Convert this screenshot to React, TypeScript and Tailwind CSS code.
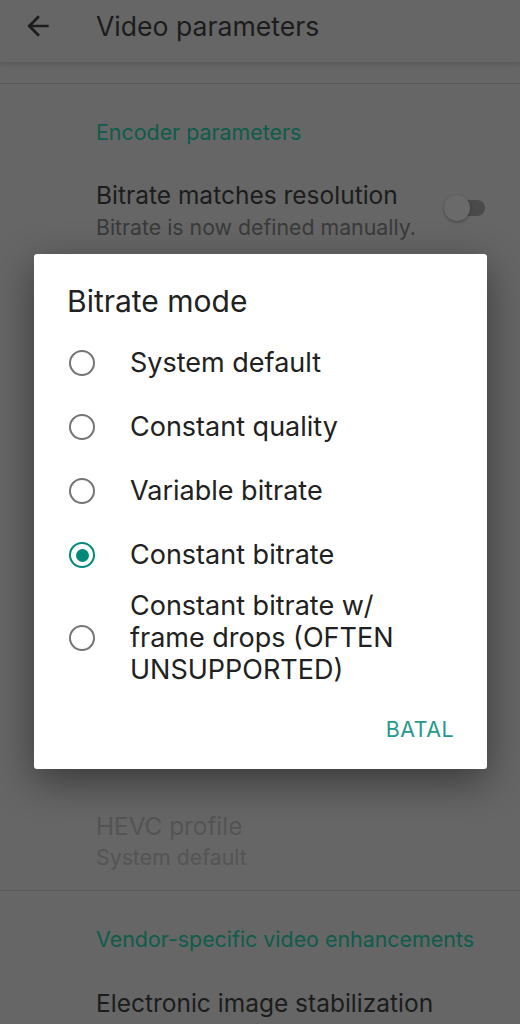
import React from 'react'

const font = { fontFamily: 'Inter, Roboto, "Noto Sans", sans-serif' }

const options = [
  'System default',
  'Constant quality',
  'Variable bitrate',
  'Constant bitrate',
  'Constant bitrate w/ frame drops (OFTEN UNSUPPORTED)',
]

function BackArrow() {
  return (
    <svg width="32" height="32" viewBox="0 0 24 24" className="fill-[#1c1c1c]">
      <path d="M20 11H7.83l5.59-5.59L12 4l-8 8 8 8 1.41-1.41L7.83 13H20v-2z" />
    </svg>
  )
}

function Radio({ checked }: { checked: boolean }) {
  if (checked) {
    return (
      <div className="flex h-[26px] w-[26px] shrink-0 items-center justify-center rounded-full border-[2.5px] border-[#00897b]">
        <div className="h-[13px] w-[13px] rounded-full bg-[#00897b]" />
      </div>
    )
  }
  return <div className="h-[26px] w-[26px] shrink-0 rounded-full border-[2.5px] border-[#757575]" />
}

function Category({ title }: { title: string }) {
  return (
    <div className="h-[80px] pl-[96px] pt-[36px]">
      <div className="text-[21.4px] leading-[24px] text-[#0e5c4b]">{title}</div>
    </div>
  )
}

export default function App() {
  return (
    <div className="relative h-[1024px] w-[520px] overflow-hidden bg-[#666666]" style={font}>
      {/* toolbar */}
      <div className="relative z-10 flex h-[63px] items-center border-b border-[#5c5c5c] pb-[11px] shadow-[0_2px_4px_rgba(0,0,0,0.12)]">
        <div className="ml-[22px] flex items-center">
          <BackArrow />
        </div>
        <div className="ml-[42px] text-[26.6px] leading-[32px] text-[#1c1c1c]">Video parameters</div>
      </div>

      {/* settings list */}
      <div className="h-[21px] border-b border-[#5a5a5a]" />
      <Category title="Encoder parameters" />
      <div className="relative h-[93px] pl-[96px] pt-[17px]">
        <div className="text-[24.5px] leading-[28px] text-[#1c1c1c]">Bitrate matches resolution</div>
        <div className="mt-[5px] text-[21.3px] leading-[26px] text-[#3a3a3a]">Bitrate is now defined manually.</div>
        <div className="absolute right-[35px] top-[31px] flex h-[26px] w-[41px] items-center">
          <div className="ml-auto h-[16px] w-[34px] rounded-full bg-[#4a4a4a]" />
          <div className="absolute left-0 top-0 h-[26px] w-[26px] rounded-full bg-[#6a6a6a] shadow-[0_1px_3px_rgba(0,0,0,0.35)]" />
        </div>
      </div>
      {/* rows hidden behind the dialog */}
      <div className="h-[537px]" />
      <div className="h-[97px] border-b border-[#5a5a5a] pl-[96px] pt-[18px]">
        <div className="text-[24.3px] leading-[28px] text-[#545454]">HEVC profile</div>
        <div className="mt-[4px] text-[21.3px] leading-[26px] text-[#545454]">System default</div>
      </div>
      <Category title="Vendor-specific video enhancements" />
      <div className="h-[93px] pl-[96px] pt-[18px]">
        <div className="text-[24.5px] leading-[28px] text-[#1c1c1c]">Electronic image stabilization</div>
        <div className="mt-[5px] text-[21.3px] leading-[26px] text-[#3a3a3a]">System default</div>
      </div>

      {/* dialog */}
      <div className="absolute left-[34px] top-[254px] flex h-[515px] w-[453px] flex-col rounded-[3px] bg-white shadow-[0_12px_40px_rgba(0,0,0,0.45)]">
        <div className="pl-[33px] pt-[31px] text-[30px] leading-[32px] text-[#212121]">Bitrate mode</div>
        <div className="mt-[14px] flex flex-col">
          {options.map((o, i) => (
            <div
              key={o}
              className={`flex items-center gap-[35px] pl-[35px] ${i === 4 ? 'py-[3px]' : 'h-[64px]'}`}
            >
              <Radio checked={i === 3} />
              <div className="max-w-[280px] text-[27px] leading-[32px] text-[#212121]">{o}</div>
            </div>
          ))}
        </div>
        <div className="mt-auto flex justify-end pb-[30px] pr-[33px]">
          <div className="text-[21.4px] leading-[20px] tracking-[0.5px] text-[#26998b]">BATAL</div>
        </div>
      </div>
    </div>
  )
}
